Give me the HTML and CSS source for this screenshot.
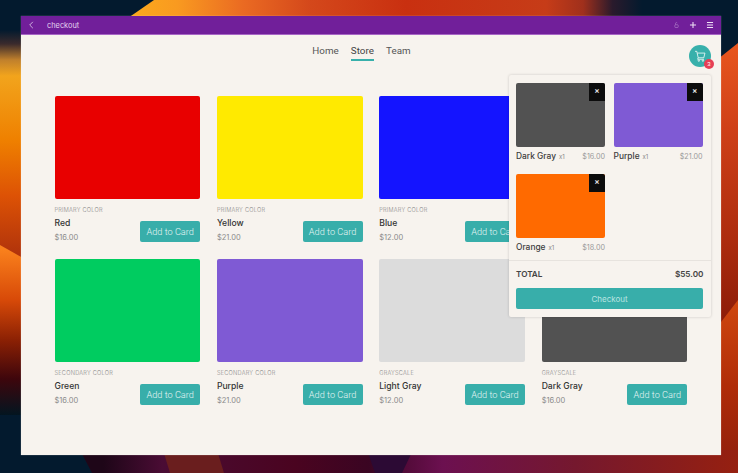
FILE: index.html
```html
<!DOCTYPE html>
<html lang="en">
<head>
<meta charset="utf-8">
<title>checkout</title>
<link rel="stylesheet" href="styles.css">
</head>
<body>
<svg class="wallpaper" viewBox="0 0 738 473" preserveAspectRatio="none" aria-hidden="true">
  <defs>
    <linearGradient id="top" x1="0" y1="0" x2="738" y2="0" gradientUnits="userSpaceOnUse">
      <stop offset="0.17" stop-color="#fbab1c"/><stop offset="0.24" stop-color="#f99a20"/><stop offset="0.33" stop-color="#ea6a22"/><stop offset="0.42" stop-color="#d4481b"/><stop offset="0.55" stop-color="#c93010"/><stop offset="0.74" stop-color="#c63c18"/><stop offset="0.79" stop-color="#a0301c"/><stop offset="0.83" stop-color="#2a1a2c"/><stop offset="0.87" stop-color="#031a2e"/>
    </linearGradient>
    <linearGradient id="left1" x1="0" y1="30" x2="0" y2="260" gradientUnits="userSpaceOnUse">
      <stop offset="0" stop-color="#031a2e"/><stop offset="0.06" stop-color="#3a2a2c"/><stop offset="0.13" stop-color="#c0802c"/><stop offset="0.2" stop-color="#f2a41c"/><stop offset="0.48" stop-color="#ef8000"/><stop offset="0.72" stop-color="#dd5205"/><stop offset="1" stop-color="#ac300c"/>
    </linearGradient>
    <linearGradient id="left2" x1="0" y1="250" x2="0" y2="415" gradientUnits="userSpaceOnUse">
      <stop offset="0" stop-color="#f9801c"/><stop offset="0.3" stop-color="#d84a08"/><stop offset="0.55" stop-color="#8a2004"/><stop offset="0.78" stop-color="#3e060c"/><stop offset="1" stop-color="#031520"/>
    </linearGradient>
    <linearGradient id="right1" x1="0" y1="45" x2="0" y2="322" gradientUnits="userSpaceOnUse">
      <stop offset="0" stop-color="#e8561e"/><stop offset="0.3" stop-color="#cf4018"/><stop offset="0.7" stop-color="#ad2c0e"/><stop offset="1" stop-color="#8c1c08"/>
    </linearGradient>
    <linearGradient id="right2" x1="0" y1="300" x2="0" y2="473" gradientUnits="userSpaceOnUse">
      <stop offset="0" stop-color="#d0480f"/><stop offset="0.5" stop-color="#b02c08"/><stop offset="1" stop-color="#8c1e0c"/>
    </linearGradient>
    <linearGradient id="bot" x1="0" y1="0" x2="738" y2="0" gradientUnits="userSpaceOnUse">
      <stop offset="0.14" stop-color="#1e0618"/><stop offset="0.22" stop-color="#4a0c34"/><stop offset="0.4" stop-color="#4a0420"/><stop offset="0.5" stop-color="#3a0522"/><stop offset="0.6" stop-color="#6c1050"/><stop offset="0.78" stop-color="#75182e"/><stop offset="1" stop-color="#962010"/>
    </linearGradient>
  </defs>
  <rect width="738" height="473" fill="#031a2e"/>
  <polygon points="128,18 154,0 738,0 738,18" fill="url(#top)"/>
  <rect x="0" y="30" width="30" height="230" fill="url(#left1)"/>
  <polygon points="0,245 30,262 30,415 0,415" fill="url(#left2)"/>
  <polygon points="698,75 738,43 738,322 698,352" fill="url(#right1)"/>
  <polygon points="698,352 738,300 738,473 698,473" fill="url(#right2)"/>
  <polygon points="80,450 738,450 738,473 92,473" fill="url(#bot)"/>
  <polygon points="163,450 217,450 224,473 170,473" fill="#6a1e1e"/>
  <polygon points="367,450 413,450 402,473 375,473" fill="#2c0a34"/>
</svg>

<main class="window">
  <header class="titlebar">
    <svg class="icon back" viewBox="0 0 10 10"><path d="M6.5 1.5 3 5l3.5 3.5"/></svg>
    <span class="title">checkout</span>
    <div class="actions">
      <svg class="icon lock" viewBox="0 0 10 10"><rect x="2.6" y="4.6" width="4.8" height="4" rx="1"/><path d="M3.6 4.4V2.8A1.4 1.4 0 0 1 6 1.9"/></svg>
      <svg class="icon" viewBox="0 0 10 10"><path d="M5 1.2v7.6M1.2 5h7.6"/></svg>
      <svg class="icon" viewBox="0 0 10 10"><path d="M1.2 2h7.6M1.2 5h7.6M1.2 8h7.6"/></svg>
    </div>
  </header>

  <div class="content">
    <nav class="nav">
      <a class="nav-link">Home</a>
      <a class="nav-link active">Store</a>
      <a class="nav-link">Team</a>
    </nav>

    <button class="cart-btn" aria-label="Cart">
      <svg viewBox="0 0 24 24"><path d="M3.5 4h3l2.4 11h9.6l2-8H7.4M8.9 15l-1 2.6h11"/><circle cx="10" cy="20" r="1.2"/><circle cx="17" cy="20" r="1.2"/></svg>
      <span class="badge">3</span>
    </button>

    <section class="grid">
      <article class="card"><div class="swatch red"></div><p class="cat">PRIMARY COLOR</p><div class="row"><div><h3>Red</h3><p class="price">$16.00</p></div><button class="add">Add to Card</button></div></article>
      <article class="card"><div class="swatch yellow"></div><p class="cat">PRIMARY COLOR</p><div class="row"><div><h3>Yellow</h3><p class="price">$21.00</p></div><button class="add">Add to Card</button></div></article>
      <article class="card"><div class="swatch blue"></div><p class="cat">PRIMARY COLOR</p><div class="row"><div><h3>Blue</h3><p class="price">$12.00</p></div><button class="add">Add to Card</button></div></article>
      <article class="card"><div class="swatch orange"></div><p class="cat">PRIMARY COLOR</p><div class="row"><div><h3>Orange</h3><p class="price">$18.00</p></div><button class="add">Add to Card</button></div></article>
      <article class="card"><div class="swatch green"></div><p class="cat">SECONDARY COLOR</p><div class="row"><div><h3>Green</h3><p class="price">$16.00</p></div><button class="add">Add to Card</button></div></article>
      <article class="card"><div class="swatch purple"></div><p class="cat">SECONDARY COLOR</p><div class="row"><div><h3>Purple</h3><p class="price">$21.00</p></div><button class="add">Add to Card</button></div></article>
      <article class="card"><div class="swatch light"></div><p class="cat">GRAYSCALE</p><div class="row"><div><h3>Light Gray</h3><p class="price">$12.00</p></div><button class="add">Add to Card</button></div></article>
      <article class="card"><div class="swatch dark"></div><p class="cat">GRAYSCALE</p><div class="row"><div><h3>Dark Gray</h3><p class="price">$16.00</p></div><button class="add">Add to Card</button></div></article>
    </section>

    <aside class="popup">
      <div class="items">
        <div class="item"><div class="thumb dark"><span class="remove">×</span></div><div class="line"><b>Dark Gray</b><i>x1</i><span>$16.00</span></div></div>
        <div class="item"><div class="thumb purple"><span class="remove">×</span></div><div class="line"><b>Purple</b><i>x1</i><span>$21.00</span></div></div>
        <div class="item"><div class="thumb orange"><span class="remove">×</span></div><div class="line"><b>Orange</b><i>x1</i><span>$18.00</span></div></div>
      </div>
      <div class="total"><b>TOTAL</b><b>$55.00</b></div>
      <button class="checkout">Checkout</button>
    </aside>
  </div>
</main>
</body>
</html>
```

FILE: styles.css
```css
* { box-sizing: border-box; margin: 0; padding: 0; }
html, body { width: 738px; height: 473px; overflow: hidden; }
body {
  position: relative;
  padding: 16px 17px 18px 21px;
  font-family: Inter, "Liberation Sans", sans-serif;
  background: #031a2e;
}
.wallpaper { position: absolute; left: 0; top: 0; width: 738px; height: 473px; display: block; }

.window {
  position: relative;
  height: 439px;
  display: flex;
  flex-direction: column;
  background: #f7f3ee;
  box-shadow: 0 0 1px rgba(255, 255, 255, .5);
}
.titlebar {
  height: 19px;
  flex: none;
  display: flex;
  align-items: center;
  padding: 0 6px 0 6px;
  background: #711f9a;
  border-bottom: 1px solid #a765c5;
  color: #e4d3ee;
}
.icon { width: 8px; height: 8px; fill: none; stroke: #efe3f5; stroke-width: 1.3; display: block; }
.back { width: 9px; height: 10px; stroke: #e0cdea; stroke-width: .9; }
.title { margin-left: 11px; font-size: 7.4px; }
.actions { margin-left: auto; display: flex; align-items: center; gap: 9px; padding-right: 1.3px; }
.lock { width: 7px; height: 8px; stroke: #b98fd0; stroke-width: .8; }

.content { position: relative; flex: 1; padding: 0 33.5px; }
.nav { display: flex; justify-content: center; gap: 12px; height: 61px; padding-top: 10px; padding-right: 19px; }
.nav-link { font-family: Roboto, sans-serif; font-size: 9.8px; line-height: 12px; height: 16px; color: #555; letter-spacing: .05px; }
.nav-link.active { border-bottom: 2px solid #38b0ab; color: #444; }

.cart-btn {
  position: absolute;
  left: 668px;
  top: 9.5px;
  width: 22px;
  height: 22px;
  border: 0;
  border-radius: 50%;
  background: #38b0ab;
  display: flex;
  align-items: center;
  justify-content: center;
}
.cart-btn svg { width: 14px; height: 14px; fill: none; stroke: #f3fbfa; stroke-width: 1.4; }
.badge {
  position: absolute;
  right: -3px;
  bottom: -2.5px;
  width: 10px;
  height: 10px;
  border-radius: 50%;
  background: #e63f55;
  color: #fff;
  font-size: 6px;
  line-height: 10px;
  text-align: center;
}

.grid { display: grid; grid-template-columns: repeat(4, 145.7px); column-gap: 16.7px; row-gap: 16px; }
.card { height: 147px; }
.swatch { height: 103px; border-radius: 2px; }
.red { background: #e80000; }
.yellow { background: #ffea00; }
.blue { background: #1414ff; }
.orange { background: #ff6a00; }
.green { background: #00cc60; }
.purple { background: #7f5ad4; }
.light { background: #dcdcdc; }
.dark { background: #525252; }
.cat { margin-top: 8px; font-size: 5.6px; font-weight: 300; line-height: 7px; color: #888; letter-spacing: .25px; }
.row { margin-top: 3px; display: flex; justify-content: space-between; align-items: flex-start; }
h3 { font-size: 8.6px; line-height: 12px; font-weight: 500; color: #333; }
.price { margin-top: 4px; font-size: 7.5px; line-height: 10px; color: #8a8a8a; }
.add {
  width: 60px;
  height: 20.5px;
  margin-top: 4px;
  border: 0;
  border-radius: 2px;
  background: #38aeaa;
  color: #e6f5f4;
  font-family: Roboto, sans-serif;
  font-size: 9.2px;
  font-weight: 300;
}

.popup {
  position: absolute;
  left: 487.5px;
  top: 40px;
  width: 202.5px;
  height: 242px;
  padding: 8px 7.5px 0;
  background: #f7f3ee;
  border-radius: 2px;
  box-shadow: 0 0 3px rgba(0, 0, 0, .18);
}
.items { display: grid; grid-template-columns: 89px 89px; column-gap: 8.6px; row-gap: 0; height: 177px; grid-auto-rows: 91px; }
.thumb { position: relative; height: 64px; border-radius: 2px; }
.remove {
  position: absolute;
  right: 0;
  top: 0;
  width: 16px;
  height: 18px;
  background: #0c0c0c;
  border-top-right-radius: 2px;
  color: #ddd;
  font-size: 8px;
  font-weight: 700;
  line-height: 17px;
  text-align: center;
}
.line { display: flex; align-items: baseline; margin-top: 4px; font-size: 8.4px; line-height: 11px; }
.line b { font-weight: 500; color: #3c3c3c; }
.line i { margin-left: 3px; font-style: normal; font-size: 6px; color: #888; }
.line span { margin-left: auto; font-size: 7.2px; color: #9a9a9a; }
.total {
  margin: 0 -7.5px;
  padding: 8px 7.5px 0;
  height: 28px;
  border-top: 1px solid #e7e3de;
  display: flex;
  justify-content: space-between;
  font-size: 8.2px;
  line-height: 10px;
  color: #444;
}
.total b { font-weight: 600; }
.checkout {
  display: block;
  width: 187px;
  height: 21px;
  border: 0;
  border-radius: 2px;
  background: #38aeaa;
  color: #b8e4e1;
  font-family: inherit;
  font-size: 8px;
}
```
